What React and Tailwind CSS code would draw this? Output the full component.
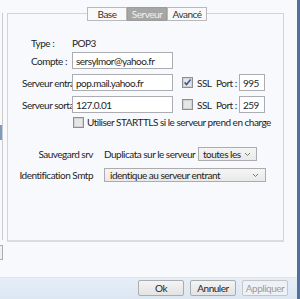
import React from "react";

function CheckBox({ checked }) {
  return (
    <svg width="11" height="11" viewBox="0 0 11 11" className="shrink-0">
      <rect x="0.5" y="0.5" width="10" height="10" fill="#f4f4f4" stroke="#8e8f8f" />
      <rect x="1.5" y="1.5" width="8" height="8" fill="#e6e6e6" stroke="#d2d2d2" />
      {checked && (
        <path d="M2.6 5.4 L4.6 7.6 L8.6 2.6" fill="none" stroke="#3b5b99" strokeWidth="1.6" strokeLinejoin="round" />
      )}
    </svg>
  );
}

function Chevron() {
  return (
    <svg width="7" height="5" viewBox="0 0 7 5" className="shrink-0">
      <path d="M1 1 L3.5 3.5 L6 1" fill="none" stroke="#7a7a7a" strokeWidth="1" />
    </svg>
  );
}

export default function App() {
  return (
    <div
      className="w-[300px] h-[299px] overflow-hidden flex bg-[#f8f9fc] text-[10px] tracking-[-0.5px] whitespace-nowrap text-[#1e1e1e] leading-[12px]"
      style={{ fontFamily: "Lato, 'Noto Sans', sans-serif" }}
    >
      <div className="flex-1 flex flex-col">
        <div className="h-[277px] flex">
          {/* left strip (edge of neighbouring list) */}
          <div className="w-[7px] flex flex-col">
            <div className="mt-[13px] h-[227px] w-[3px] border-r border-[#cbcbcb] flex flex-col">
              <div className="h-[112px]" />
              <div className="h-[15px] w-[2px] bg-[#7d9bc2]" />
            </div>
            <div className="mt-[5px] h-[15px] w-[3px] border border-l-0 border-[#adadad] bg-[#f0f0f0]" />
          </div>

          {/* tab panel */}
          <div className="relative mt-[13px] w-[277px] h-[229px] border border-b-2 border-[#d2d4d8] border-b-[#dcdcdc] flex flex-col">
            {/* tabs over the top border */}
            <div className="absolute left-[79px] top-[-7px] flex h-[14px]">
              <div className="w-[40px] h-[14px] border border-[#b9b9b9] bg-[#f9f9f9] flex items-center justify-center text-[#333]">
                Base
              </div>
              <div className="w-[40px] h-[14px] border border-[#9c9c9c] bg-[#a6a6a6] flex items-center justify-center text-[#f2f2f2]">
                Serveur
              </div>
              <div className="w-[40px] h-[14px] border border-[#b9b9b9] bg-[#f9f9f9] flex items-center justify-center text-[#333]">
                Avancé
              </div>
            </div>

            {/* Type */}
            <div className="mt-[22px] h-[14px] flex items-center">
              <span className="ml-[23px] w-[41px]">Type :</span>
              <span>POP3</span>
            </div>

            {/* Compte */}
            <div className="mt-[2px] h-[17px] flex items-center">
              <span className="ml-[23px] w-[41px]">Compte :</span>
              <div className="w-[101px] h-[17px] border border-[#abadb3] bg-white flex items-center pl-[3px]">
                sersylmor@yahoo.fr
              </div>
            </div>

            {/* Serveur entrant */}
            <div className="mt-[5px] h-[17px] flex items-center">
              <span className="ml-[14px] w-[50px] overflow-hidden">Serveur entrant</span>
              <div className="w-[101px] h-[17px] border border-[#abadb3] bg-white flex items-center pl-[3px]">
                pop.mail.yahoo.fr
              </div>
              <div className="ml-[9px]">
                <CheckBox checked />
              </div>
              <span className="ml-[4px] w-[19px]">SSL</span>
              <span className="w-[23px]">Port :</span>
              <div className="w-[26px] h-[17px] border border-[#abadb3] bg-white flex items-center pl-[3px]">
                995
              </div>
            </div>

            {/* Serveur sortant */}
            <div className="mt-[5px] h-[17px] flex items-center">
              <span className="ml-[14px] w-[50px] overflow-hidden">Serveur sortant</span>
              <div className="w-[101px] h-[17px] border border-[#abadb3] bg-white flex items-center pl-[3px]">
                127.0.01
              </div>
              <div className="ml-[9px]">
                <CheckBox />
              </div>
              <span className="ml-[4px] w-[19px]">SSL</span>
              <span className="w-[23px]">Port :</span>
              <div className="w-[26px] h-[17px] border border-[#abadb3] bg-white flex items-center pl-[3px]">
                259
              </div>
            </div>

            {/* STARTTLS */}
            <div className="mt-[3px] h-[12px] flex items-center">
              <div className="ml-[65px]">
                <CheckBox />
              </div>
              <span className="ml-[3px]">Utiliser STARTTLS si le serveur prend en charge</span>
            </div>

            {/* Sauvegard */}
            <div className="mt-[19px] h-[14px] flex items-center">
              <span className="w-[85px] text-right">Sauvegard srv</span>
              <span className="ml-[11px] w-[94px]">Duplicata sur le serveur</span>
              <div className="w-[59px] h-[14px] border border-[#acacac] bg-gradient-to-b from-[#f5f5f5] to-[#e9e9e9] flex items-center justify-between pl-[4px] pr-[5px]">
                <span>toutes les</span>
                <Chevron />
              </div>
            </div>

            {/* Identification */}
            <div className="mt-[7px] h-[14px] flex items-center">
              <span className="w-[85px] text-right">Identification Smtp</span>
              <div className="ml-[11px] w-[162px] h-[14px] border border-[#acacac] bg-gradient-to-b from-[#f5f5f5] to-[#e9e9e9] flex items-center justify-between pl-[5px] pr-[6px]">
                <span>identique au serveur entrant</span>
                <Chevron />
              </div>
            </div>
          </div>
        </div>

        {/* bottom button bar */}
        <div className="h-[22px] border-t border-[#dde6f0] bg-gradient-to-b from-[#e6eef8] to-[#dce7f3] flex items-start justify-end pr-[9px] pt-[2px] gap-[6px]">
          <div className="w-[46px] h-[16px] border border-[#acacac] rounded-[2px] bg-gradient-to-b from-[#f4f4f4] to-[#e3e3e3] flex items-center justify-center">
            Ok
          </div>
          <div className="w-[46px] h-[16px] border border-[#acacac] rounded-[2px] bg-gradient-to-b from-[#f4f4f4] to-[#e3e3e3] flex items-center justify-center">
            Annuler
          </div>
          <div className="w-[46px] h-[16px] border border-[#c6c6c6] rounded-[2px] bg-[#eef1f5] flex items-center justify-center text-[#9c9c9c]">
            Appliquer
          </div>
        </div>
      </div>
      <div className="w-[3px] h-full bg-[#4f719c]" />
    </div>
  );
}
